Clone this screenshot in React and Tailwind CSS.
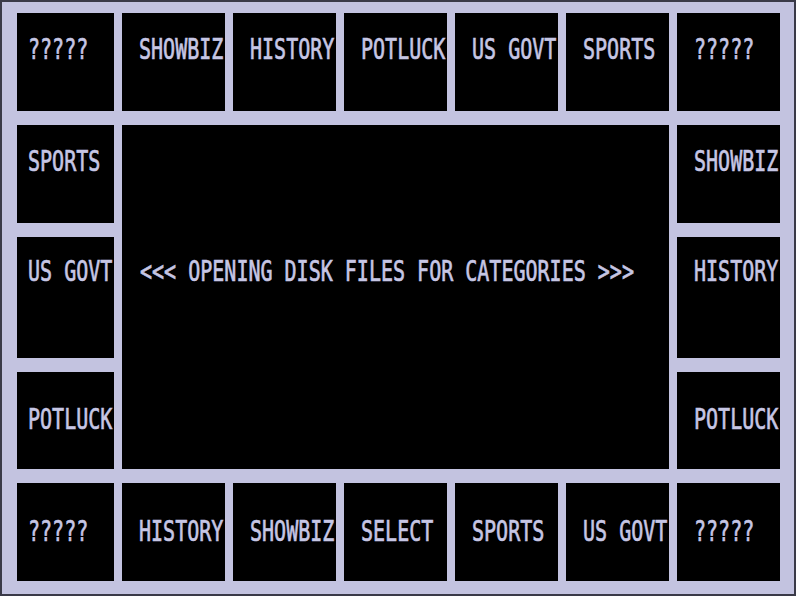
import React from "react";

// board squares: [label, col, row]
const tiles = [
  ["?????", 1, 1], ["SHOWBIZ", 2, 1], ["HISTORY", 3, 1], ["POTLUCK", 4, 1],
  ["US GOVT", 5, 1], ["SPORTS", 6, 1], ["?????", 7, 1],
  ["SPORTS", 1, 2], ["SHOWBIZ", 7, 2],
  ["US GOVT", 1, 3], ["HISTORY", 7, 3],
  ["POTLUCK", 1, 4], ["POTLUCK", 7, 4],
  ["?????", 1, 5], ["HISTORY", 2, 5], ["SHOWBIZ", 3, 5], ["SELECT", 4, 5],
  ["SPORTS", 5, 5], ["US GOVT", 6, 5], ["?????", 7, 5],
];

const colClass = {
  1: "col-start-1", 2: "col-start-2", 3: "col-start-3", 4: "col-start-4",
  5: "col-start-5", 6: "col-start-6", 7: "col-start-7",
};
const rowClass = {
  1: "row-start-1 pt-[22px]", 2: "row-start-2 pt-[22px]", 3: "row-start-3 pt-[20px]",
  4: "row-start-4 pt-[33px]", 5: "row-start-5 pt-[34px]",
};

function Label({ children }) {
  return (
    <span className="inline-block origin-left scale-x-[0.69] whitespace-pre font-['DejaVu_Sans_Mono',monospace] text-[29px] leading-none text-[#c6c6e4] [-webkit-text-stroke:0.7px_#c6c6e4]">
      {children}
    </span>
  );
}

export default function App() {
  return (
    <div className="h-[596px] w-[796px] border-[2px] border-[#3a3a48] bg-[#c3c3e0]">
      <div className="grid grid-cols-[97px_repeat(6,103px)] grid-rows-[98px_98px_121px_97px_98px] gap-x-[8px] gap-y-[14px] pl-[15px] pt-[11px]">
        {tiles.map(([label, c, r], i) => (
          <div
            key={i}
            className={`${colClass[c]} ${rowClass[r]} overflow-hidden bg-black ${c === 1 ? "pl-[11px]" : "pl-[17px]"}`}
          >
            <Label>{label}</Label>
          </div>
        ))}
        <div className="col-start-2 col-end-7 row-start-2 row-end-5 overflow-hidden bg-black pl-[18px] pt-[132px]">
          <Label>{"<<< OPENING DISK FILES FOR CATEGORIES >>>"}</Label>
        </div>
      </div>
    </div>
  );
}
